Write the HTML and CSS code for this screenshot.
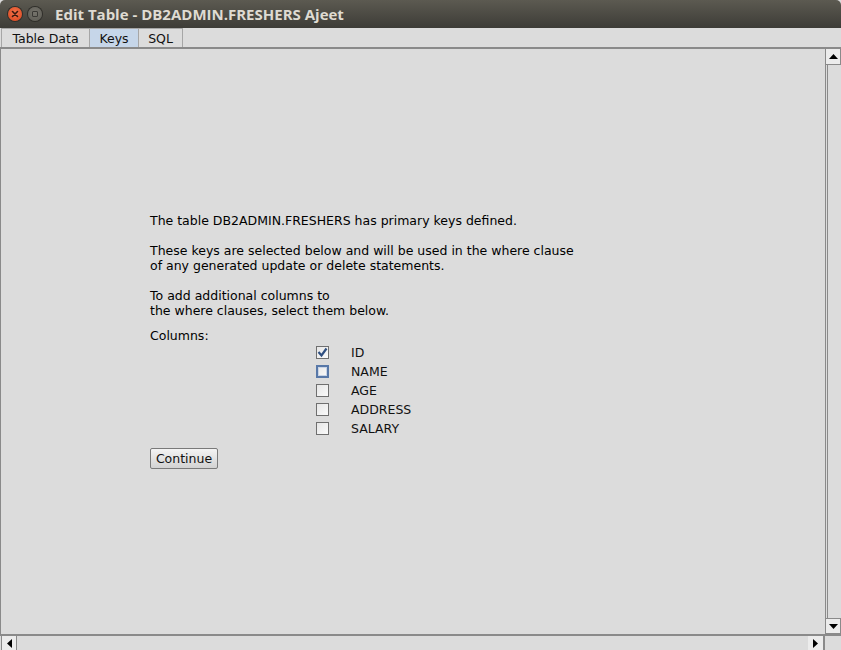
FILE: index.html
```html
<!DOCTYPE html>
<html>
<head>
<meta charset="utf-8">
<link rel="stylesheet" href="styles.css">
</head>
<body>
<div class="window">
  <div class="titlebar">
    <span class="wbtn close"><svg width="14" height="14" viewBox="0 0 14 14"><path d="M4.5 4.5 L9.5 9.5 M9.5 4.5 L4.5 9.5" stroke="#3a1a10" stroke-width="1.6" stroke-linecap="round"/></svg></span>
    <span class="wbtn max"><span class="sq"></span></span>
    <span class="title">Edit Table - DB2ADMIN.FRESHERS Ajeet</span>
  </div>
  <div class="tabs">
    <span class="tab t1">Table Data</span>
    <span class="tab t2 active">Keys</span>
    <span class="tab t3">SQL</span>
  </div>
  <div class="body">
    <div class="view">
      <div class="content">
        <p class="line">The table DB2ADMIN.FRESHERS has primary keys defined.</p>
        <p class="line">&nbsp;</p>
        <p class="line">These keys are selected below and will be used in the where clause</p>
        <p class="line">of any generated update or delete statements.</p>
        <p class="line">&nbsp;</p>
        <p class="line">To add additional columns to</p>
        <p class="line">the where clauses, select them below.</p>
        <p class="label">Columns:</p>
        <div class="cols">
          <div class="row"><span class="cb"><svg width="11" height="11" viewBox="0 0 11 11"><path d="M1.5 5 L4.5 8.5 L9.5 1.5" fill="none" stroke="#2f4f80" stroke-width="2.2"/></svg></span><span class="cname">ID</span></div>
          <div class="row"><span class="cb focus"></span><span class="cname">NAME</span></div>
          <div class="row"><span class="cb"></span><span class="cname">AGE</span></div>
          <div class="row"><span class="cb"></span><span class="cname">ADDRESS</span></div>
          <div class="row"><span class="cb"></span><span class="cname">SALARY</span></div>
        </div>
        <button class="btn">Continue</button>
      </div>
    </div>
    <div class="vscroll">
      <span class="sbtn"><svg width="9" height="5" viewBox="0 0 9 5"><path d="M0 5 L4.5 0 L9 5 Z" fill="#000"/></svg></span>
      <span class="track"></span>
      <span class="sbtn"><svg width="9" height="5" viewBox="0 0 9 5"><path d="M0 0 L4.5 5 L9 0 Z" fill="#000"/></svg></span>
    </div>
  </div>
  <div class="hscroll">
    <span class="sbtn"><svg width="5" height="9" viewBox="0 0 5 9"><path d="M5 0 L0 4.5 L5 9 Z" fill="#000"/></svg></span>
    <span class="htrack"></span>
    <span class="sbtn"><svg width="5" height="9" viewBox="0 0 5 9"><path d="M0 0 L5 4.5 L0 9 Z" fill="#000"/></svg></span>
    <span class="corner"></span>
  </div>
</div>
</body>
</html>
```

FILE: styles.css
```css
html, body {
  margin: 0;
  padding: 0;
  width: 841px;
  height: 650px;
  overflow: hidden;
  background: #dcdcdc;
}
.window {
  width: 841px;
  height: 650px;
  display: flex;
  flex-direction: column;
  font-family: "DejaVu Sans", sans-serif;
  font-size: 12.5px;
  color: #000;
}
.titlebar {
  height: 28px;
  flex: none;
  display: flex;
  align-items: center;
  background: linear-gradient(#5c5a51, #3d3c37);
  border-radius: 5px 5px 0 0;
  box-sizing: border-box;
  padding-left: 8px;
}
.wbtn {
  width: 14px;
  height: 14px;
  border-radius: 50%;
  display: flex;
  align-items: center;
  justify-content: center;
  flex: none;
}
.close {
  background: radial-gradient(circle at 50% 40%, #f4734a, #d9441c);
  box-shadow: 0 0 0 1px #2f2e2a;
}
.max {
  margin-left: 6px;
  background: radial-gradient(circle at 50% 40%, #76746c, #5a5952);
  box-shadow: 0 0 0 1px #2f2e2a;
}
.max .sq {
  width: 6px;
  height: 6px;
  border: 1px solid #3a3935;
  box-sizing: border-box;
  border-radius: 1px;
}
.title {
  margin-left: 13px;
  font-family: "Open Sans", "DejaVu Sans", sans-serif;
  font-weight: bold;
  font-size: 15px;
  color: #dfdbd2;
}
.tabs {
  height: 19px;
  flex: none;
  display: flex;
  align-items: flex-end;
  padding-left: 1px;
  background: #dcdcdc;
  box-sizing: border-box;
}
.tab {
  height: 19px;
  box-sizing: border-box;
  border: 1px solid #a6a6a6;
  border-bottom: none;
  display: flex;
  align-items: center;
  justify-content: center;
  color: #111;
  margin-right: -1px;
  background: #dcdcdc;
}
.t1 { width: 89px; }
.t2 { width: 50px; }
.t3 { width: 45px; }
.tab.active {
  background: #c6d6e9;
}
.body {
  flex: 1;
  display: flex;
  border-top: 2px solid #8a8a8a;
  border-left: 1px solid #8a8a8a;
  min-height: 0;
}
.view {
  flex: 1;
  position: relative;
}
.content {
  padding: 164px 0 0 149px;
}
.line, .label {
  margin: 0;
  line-height: 15px;
  white-space: nowrap;
}
.label {
  margin-top: 10px;
}
.cols {
  margin-left: 166px;
  margin-top: 0;
}
.row {
  height: 19px;
  display: flex;
  align-items: center;
}
.cb {
  width: 13px;
  height: 13px;
  box-sizing: border-box;
  border: 1px solid #6f6f6f;
  background: linear-gradient(135deg, #e6e6e6, #fafafa);
  display: flex;
  align-items: center;
  justify-content: center;
}
.cb.focus {
  border: 2px solid #5878a8;
  box-shadow: inset 0 0 0 1px #c8d4e6;
  background: linear-gradient(135deg, #e8e8e8, #fafafa);
}
.cname {
  margin-left: 22px;
  color: #111;
}
.btn {
  margin-top: 10px;
  height: 21px;
  width: 68px;
  padding: 0;
  font-family: "DejaVu Sans", sans-serif;
  font-size: 12.5px;
  color: #111;
  border: 1px solid #7a7a7a;
  border-radius: 2px;
  background: linear-gradient(#f4f4f4, #d2d2d2);
}
.vscroll {
  width: 16px;
  flex: none;
  display: flex;
  flex-direction: column;
  border-left: 1px solid #8a8a8a;
  box-sizing: border-box;
}
.sbtn {
  width: 15px;
  height: 16px;
  flex: none;
  display: flex;
  align-items: center;
  justify-content: center;
  box-sizing: border-box;
  background: #ececec;
  border: 1px solid #8a8a8a;
  border-left: none;
}
.vscroll .sbtn:first-child {
  border-top: none;
}
.track {
  flex: 1;
  border-left: 1px solid #8a8a8a;
  margin-left: 1px;
}
.hscroll {
  height: 16px;
  flex: none;
  display: flex;
  border-top: 2px solid #8a8a8a;
  box-sizing: border-box;
}
.hscroll .sbtn {
  width: 16px;
  height: 14px;
  border: none;
  border-right: 1px solid #8a8a8a;
}
.hscroll .sbtn:first-child {
  margin-left: 1px;
  border-left: 1px solid #8a8a8a;
}
.htrack {
  flex: 1;
}
.corner {
  width: 16px;
  background: #dcdcdc;
  border-left: 1px solid #8a8a8a;
}
```
